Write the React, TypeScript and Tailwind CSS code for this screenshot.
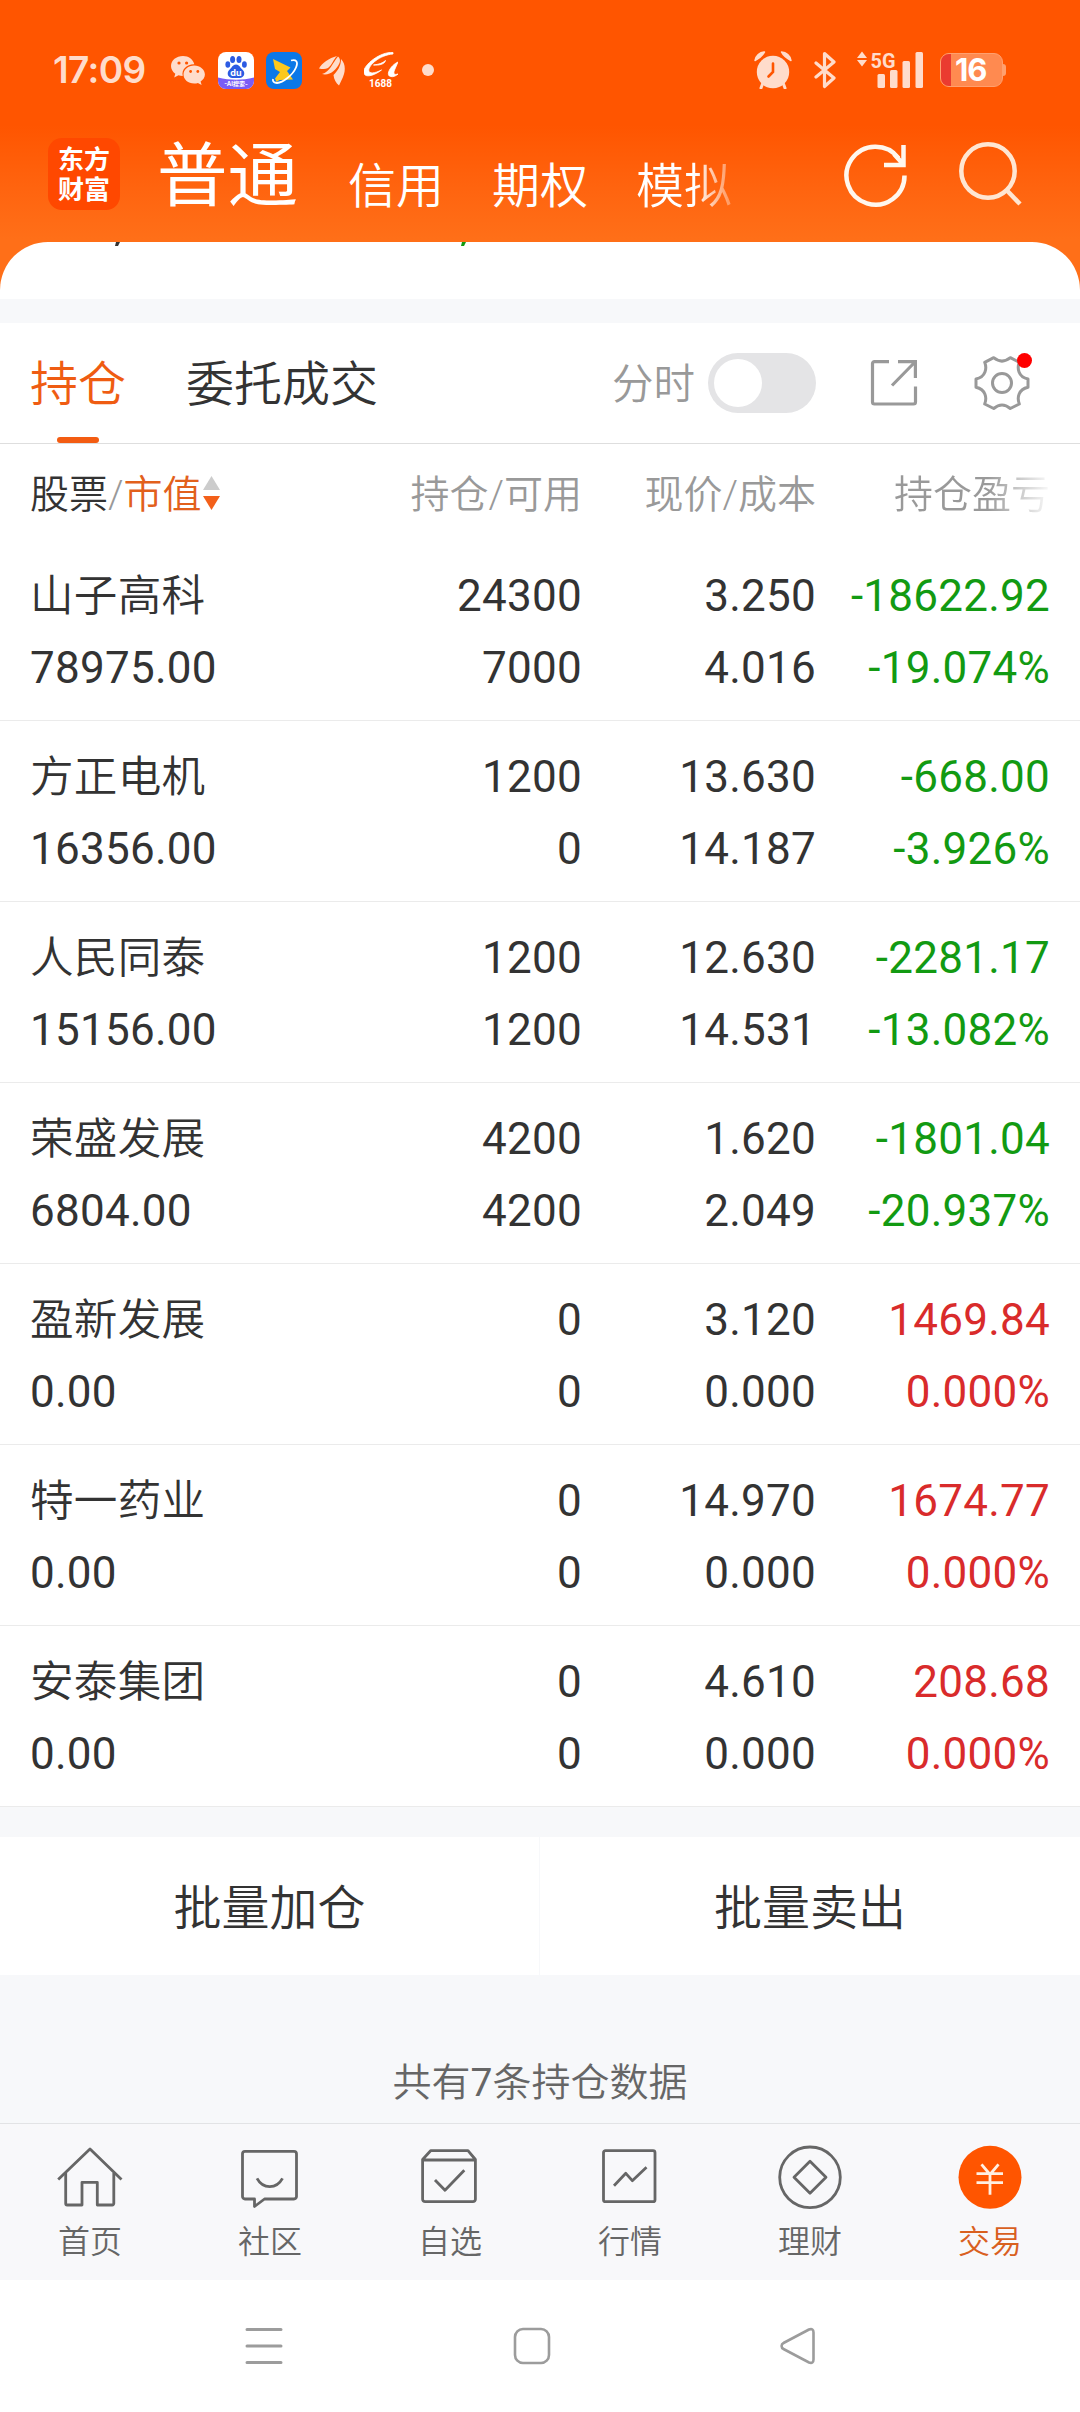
import { ReactNode } from "react";

type Holding = {
  name: string;
  value: string;
  amount: string;
  available: string;
  price: string;
  cost: string;
  profit: string;
  percent: string;
};

const HOLDINGS: Holding[] = [
  { name: "山子高科", value: "78975.00", amount: "24300", available: "7000", price: "3.250", cost: "4.016", profit: "-18622.92", percent: "-19.074%" },
  { name: "方正电机", value: "16356.00", amount: "1200", available: "0", price: "13.630", cost: "14.187", profit: "-668.00", percent: "-3.926%" },
  { name: "人民同泰", value: "15156.00", amount: "1200", available: "1200", price: "12.630", cost: "14.531", profit: "-2281.17", percent: "-13.082%" },
  { name: "荣盛发展", value: "6804.00", amount: "4200", available: "4200", price: "1.620", cost: "2.049", profit: "-1801.04", percent: "-20.937%" },
  { name: "盈新发展", value: "0.00", amount: "0", available: "0", price: "3.120", cost: "0.000", profit: "1469.84", percent: "0.000%" },
  { name: "特一药业", value: "0.00", amount: "0", available: "0", price: "14.970", cost: "0.000", profit: "1674.77", percent: "0.000%" },
  { name: "安泰集团", value: "0.00", amount: "0", available: "0", price: "4.610", cost: "0.000", profit: "208.68", percent: "0.000%" },
];

const StatusBar = () => (
  <div className="flex h-[125px] items-start justify-between pr-[74px] pl-[53px] pt-[50px]">
    <div className="flex h-10 items-center">
      <span className="w-[118px] font-['Inter'] text-[37px] leading-10 font-semibold tracking-[-0.6px] text-[#ffdccb]">
        17:09
      </span>
      <svg width="34" height="30" viewBox="0 0 34 30" fill="#ffdccb">
        <path d="M12 1C5.400 1 0 5.300 0 11c0 3.200 1.700 5.900 4.300 7.700L3.200 22.500l4.300-2.200c1.300.4 2.700.6 4.200.6-1.400-6.600 4.500-11.900 11.600-11.600C22.200 4.500 17.600 1 12 1z" />
        <path d="M23.200 10.600c-6 0-10.700 4-10.700 9s4.700 9 10.700 9c1.300 0 2.600-.2 3.700-.6l3.700 2-1-3.400c2.600-1.700 4.300-4.200 4.300-7 0-5-4.800-9-10.700-9z" />
        <g fill="#ff5500">
          <circle cx="8" cy="8" r="1.600" />
          <circle cx="15.600" cy="8" r="1.600" />
          <circle cx="19.600" cy="16.500" r="1.400" />
          <circle cx="26.800" cy="16.500" r="1.400" />
        </g>
      </svg>
      <svg className="ml-[13px]" width="36" height="37" viewBox="0 0 36 37">
        <rect width="36" height="37" rx="8" fill="#fff" />
        <path d="M0 25.500c12 3 24 3 36 0V29a8 8 0 0 1-8 8H8a8 8 0 0 1-8-8z" fill="#7a5cf5" />
        <g fill="#2b5be3">
          <ellipse cx="9.800" cy="12.500" rx="2.400" ry="3.300" />
          <ellipse cx="14.600" cy="7.500" rx="2.500" ry="3.500" />
          <ellipse cx="21" cy="7.500" rx="2.500" ry="3.500" />
          <ellipse cx="26.400" cy="12.500" rx="2.400" ry="3.300" />
          <path d="M18 12.500c3.200 0 4.300 3.300 6.300 5 3.600 3 2 8.500-2.800 8.500h-7c-4.800 0-6.400-5.500-2.800-8.500 2-1.700 3.100-5 6.300-5z" />
        </g>
        <text x="18" y="24" fontSize="9" fontWeight="700" fill="#fff" textAnchor="middle" fontFamily="Inter">du</text>
        <text x="18" y="34" fontSize="6" fontWeight="700" fill="#fff" textAnchor="middle" fontFamily="Inter, 'Noto Sans CJK SC'">-AI搜索-</text>
      </svg>
      <svg className="ml-3" width="36" height="37" viewBox="0 0 36 37">
        <rect width="36" height="37" rx="8" fill="#0b78e8" />
        <path d="M7 7l17.500 8.500-3.500 3.500 6 8.500-13.500.5-3 2-1.500-3.500 5-6.500-5-3z" fill="#fcc81c" />
        <path d="M25 8.500c5-1.500 7.500 1 5 7-3.500 8-13 15-19 15.500-3 0-4.500-1.500-4-4" fill="none" stroke="#fff" strokeWidth="1.800" />
      </svg>
      <svg className="ml-[17px]" width="26" height="31" viewBox="0 0 26 31" fill="#ffdccb">
        <path d="M0 13.500C3 8 10 3 18 1c-4 4-5 9-9 12-3 1.700-6 1-9 .5z" />
        <path d="M3 19C11 17 13.500 8 19 1.500c2 1.500 2.500 4 1.500 6.500-3 7-10 13-17.500 11z" />
        <path d="M14.500 20c4-4 7.500-9 7.500-16 4 4 4.500 10 3 15-1.500 5-3.500 8-5 11.500-3-2.500-5-6-5.500-10.500z" />
      </svg>
      <svg className="ml-[19px]" width="34" height="37" viewBox="0 0 34 37">
        <path
          d="M29 .5C16-.5-.5 13-.2 20c.3 6.500 10 4 17.700-2-7 3.500-12.500 4-12.700.5C4.500 13 16 3 29 2zM9.500 13c5 .5 11-.5 12-4.500-3 3-7 3.800-12 4.500zM34 10c-7 3-13 13-7.500 14.500 3 .8 6-1 7.500-2.500-3.500 1-5 .5-3.500-4z"
          fill="#fff"
          stroke="#fff"
          strokeWidth=".8"
        />
        <text x="16.500" y="35" fontSize="10" fontWeight="700" fill="#fff" textAnchor="middle" fontFamily="Roboto">1688</text>
      </svg>
      <span className="ml-6 size-3 rounded-full bg-[#ffdccb]" />
    </div>

    <div className="flex h-10 items-center">
      <svg width="38" height="38" viewBox="0 0 38 38" fill="#ffdccb">
        <circle cx="19" cy="21" r="16.200" />
        <path d="M1 9.500A10 10 0 0 1 10.500 1Q8 6 1 9.500zM37 9.500A10 10 0 0 0 27.500 1Q30 6 37 9.500z" stroke="#ffdccb" strokeWidth="1.500" strokeLinejoin="round" />
        <path d="M8.500 33L7 37M29.500 33l1.500 4" stroke="#ffdccb" strokeWidth="3" strokeLinecap="round" />
        <path d="M19 12.500V21l-4.500 4.500" fill="none" stroke="#ff5500" strokeWidth="2.600" strokeLinecap="round" />
      </svg>
      <svg className="ml-[22px]" width="22" height="38" viewBox="0 0 22 38" fill="none" stroke="#ffdccb" strokeWidth="3.200" strokeLinejoin="round" strokeLinecap="round">
        <path d="M2 12l18 15-9.500 8.500v-33L20 11 2 26" />
      </svg>
      <svg className="ml-[21px] overflow-visible" width="68" height="38" viewBox="0 0 68 38" fill="#ffdccb">
        <path d="M5 .5L10 7H0zM5 15.500L10 9H0z" />
        <text x="13.500" y="16.500" fontSize="21" fontWeight="700" textLength="25" lengthAdjust="spacingAndGlyphs" fontFamily="Roboto">5G</text>
        <rect x="20.500" y="23" width="7.500" height="14" rx="1.500" />
        <rect x="33" y="19" width="7.500" height="18" rx="1.500" />
        <rect x="45.500" y="10" width="7.500" height="27" rx="1.500" />
        <rect x="58.500" y="1" width="7.500" height="36" rx="1.500" />
      </svg>
      <div className="ml-[15px] flex items-center">
        <div className="flex h-[34px] w-[63px] items-center overflow-hidden rounded-[9px] border border-[#ffa06f] bg-[#ff8a50]">
          <div className="h-full w-2.5 bg-[#ea3b30]" />
          <span className="ml-1 font-['Inter'] text-[31px] leading-8 font-bold tracking-[-1px] text-white">16</span>
        </div>
        <div className="h-3 w-[3px] rounded-r-sm bg-[#ffa06f]" />
      </div>
    </div>
  </div>
);

const Header = () => (
  <div className="flex h-[117px] items-start pl-12">
    <p className="mt-[13px] size-[72px] rounded-[14px] bg-[#ff4800] pt-[5px] text-center font-['Noto_Sans_CJK_SC',sans-serif] text-[26px] leading-[30px] font-bold text-white">
      东方
      <br />
      财富
    </p>
    <div className="ml-[37px] flex text-[48px] font-[350] whitespace-nowrap text-white">
      <span className="mt-0.5 w-[191px] text-[70.5px] leading-[100px] font-normal">普通</span>
      <span className="mt-3 w-[144px] leading-[100px]">信用</span>
      <span className="mt-3 w-36 leading-[100px]">期权</span>
      <span className="mt-3 bg-linear-to-r from-white from-60% to-white/30 bg-clip-text leading-[100px] text-transparent">
        模拟
      </span>
    </div>
    <svg className="mt-[17px] ml-[111px]" width="66" height="66" viewBox="0 0 66 66" fill="none" stroke="#fff7ee" strokeWidth="4.500">
      <path d="M61.500 33.500A29 29 0 1 1 55.500 16" />
      <path d="M60.500 3v20H41M60 22L51 12" />
    </svg>
    <svg className="mt-[15px] ml-[48px]" width="66" height="66" viewBox="0 0 66 66" fill="none" stroke="#ffe6d2" strokeWidth="4.500">
      <circle cx="31" cy="31" r="26.700" />
      <path d="M49.500 50L63 64" />
    </svg>
  </div>
);

const Tabs = () => (
  <div className="flex h-[121px] items-center border-b border-[#dedede] pl-[30px] font-[350]">
    <div className="relative flex h-full items-center pt-1 text-[48px] text-[#ef5c12]">
      持仓
      <span className="absolute bottom-0 left-[27px] h-1.5 w-[42px] rounded-full bg-[#f35c12]" />
    </div>
    <span className="ml-[60px] w-[426px] pt-1 text-[48px] text-[#333]">委托成交</span>
    <span className="w-24 pt-1 text-[41.5px] text-[#999]">分时</span>
    <div className="flex h-[60px] w-[108px] shrink-0 items-center rounded-full bg-[#e4e4e6] p-1.5">
      <span className="size-12 rounded-full bg-white" />
    </div>
    <svg className="ml-[54px] shrink-0" width="48" height="48" viewBox="0 0 48 48" fill="none" stroke="#999" strokeWidth="3.200">
      <path d="M19 2.600H4.500a2 2 0 0 0-2 2V43a2 2 0 0 0 2 2h39a2 2 0 0 0 2-2V27.500" />
      <path d="M28 2.600h17.400V19M45 3L22 26.500" />
    </svg>
    <div className="relative ml-[54px] shrink-0">
      <svg width="60" height="60" viewBox="0 0 60 60" fill="none" stroke="#999" strokeWidth="3" strokeLinejoin="round">
        <path d="M21.700 4.700Q30 11.500 38.300 4.700L47.300 9.300C45 15 46 24 56 26V34.300C46 36.500 45 45 47.300 51L38.300 55.500Q30 48.500 21.700 55.500L12.700 51C15 45 14 36.500 4 34.300V26C14 24 15 15 12.700 9.300Z" />
        <circle cx="30" cy="30" r="9.500" />
      </svg>
      <span className="absolute top-0 right-0 size-[15px] rounded-full bg-[#ff0000]" />
    </div>
  </div>
);

const ColumnTitles = () => (
  <div className="grid h-24 grid-cols-[300px_252px_234px_234px] items-center px-[30px] pt-1.5 text-[39px] leading-[60px] font-[350] text-[#999]">
    <div className="flex items-center whitespace-nowrap">
      <span className="text-[#333]">股票</span>/<span className="text-[#e2601c]">市值</span>
      <svg className="ml-px -mt-1" width="17" height="36" viewBox="0 0 17 36">
        <path d="M8.500 1L17 15H0z" fill="#ccc" />
        <path d="M8.500 35L17 21H0z" fill="#f3601a" />
      </svg>
    </div>
    <span className="text-right">持仓/可用</span>
    <span className="text-right">现价/成本</span>
    <span className="justify-self-end bg-linear-to-r from-[#999] from-60% to-[#999]/5 bg-clip-text text-transparent">
      持仓盈亏
    </span>
  </div>
);

const HoldingRow = ({ item }: { item: Holding }) => {
  const color = item.profit.startsWith("-") ? "text-[#129a12]" : "text-[#d92b2b]";
  return (
    <div className="grid h-[181px] grid-cols-[300px_252px_234px_234px] grid-rows-[72px_72px] border-b border-[#ebebeb] px-[30px] pt-5 text-[44px] leading-[72px] tracking-[0.25px] whitespace-nowrap text-[#333]">
      <span className="pt-px text-[43.6px] font-[350]">{item.name}</span>
      <span className="text-right">{item.amount}</span>
      <span className="text-right">{item.price}</span>
      <span className={`text-right ${color}`}>{item.profit}</span>
      <span>{item.value}</span>
      <span className="text-right">{item.available}</span>
      <span className="text-right">{item.cost}</span>
      <span className={`text-right ${color}`}>{item.percent}</span>
    </div>
  );
};

const NAV_ITEMS: { label: string; icon: ReactNode }[] = [
  {
    label: "首页",
    icon: (
      <>
        <path d="M4.200 37.500L36 7l31.500 30.500" />
        <path d="M11.700 31v30.500a1.500 1.500 0 0 0 1.500 1.500H28V40.300h15.300V63h15a1.500 1.500 0 0 0 1.500-1.500V31" />
      </>
    ),
  },
  {
    label: "社区",
    icon: (
      <>
        <path d="M11 9.300h49a2.500 2.500 0 0 1 2.500 2.500v42.700A2.500 2.500 0 0 1 60 57H30.500l-10 7.500V57H11a2.500 2.500 0 0 1-2.500-2.500V11.800A2.500 2.500 0 0 1 11 9.300z" />
        <path d="M23 36.300c6 11 19.500 11 25.500 0" />
      </>
    ),
  },
  {
    label: "自选",
    icon: (
      <>
        <path d="M8.600 17.500l8-8.800H54l7.400 8.800v39.700a2.500 2.500 0 0 1-2.500 2.500H11.100a2.500 2.500 0 0 1-2.500-2.500zM8.600 18h52.800" />
        <path d="M21 38l10 10.300 19.300-20" />
      </>
    ),
  },
  {
    label: "行情",
    icon: (
      <>
        <rect x="9.500" y="8.700" width="51.500" height="51" rx="2" />
        <path d="M20 43.700l11.800-12.400 6.500 7.400 14.200-13.400" />
      </>
    ),
  },
  {
    label: "理财",
    icon: (
      <>
        <circle cx="36" cy="35.300" r="30.300" />
        <path d="M36 19.300l16 16-16 16-16-16z" />
      </>
    ),
  },
  {
    label: "交易",
    icon: (
      <>
        <circle cx="36" cy="35.300" r="31.500" fill="#ff5500" stroke="none" />
        <path d="M27.500 22.300L36 32.500l8.500-10.200M22.500 31.700h26.500M22.500 40.700h26.500M36 32v20.700" stroke="#ffefe2" />
      </>
    ),
  },
];

const BottomNav = () => (
  <div className="grid h-[157px] grid-cols-6 border-t border-[#e2e3e5] bg-[#f8f8fa] pt-[18px]">
    {NAV_ITEMS.map(({ label, icon }, index) => (
      <div key={label} className="flex flex-col items-center">
        <svg width="72" height="72" viewBox="0 0 72 72" fill="none" stroke="#666" strokeWidth="2.800" strokeLinejoin="round">
          {icon}
        </svg>
        <span className={`mt-1 text-[32px] leading-12 font-[350] ${index === 5 ? "text-[#d9601f]" : "text-[#666]"}`}>
          {label}
        </span>
      </div>
    ))}
  </div>
);

const SystemNav = () => (
  <div className="flex h-[132px] items-center bg-white pl-[245px] text-[#9c9c9c]">
    <svg width="38" height="38" viewBox="0 0 38 38" stroke="currentColor" strokeWidth="3" strokeLinecap="round">
      <path d="M2 2.500h34M2 19h34M2 35.500h34" />
    </svg>
    <svg className="ml-[230px]" width="38" height="38" viewBox="0 0 38 38" fill="none" stroke="currentColor" strokeWidth="2.600">
      <rect x="2" y="2" width="34" height="34" rx="8" />
    </svg>
    <svg className="ml-[229px]" width="36" height="38" viewBox="0 0 36 38" fill="none" stroke="currentColor" strokeWidth="2.600">
      <path d="M29 2.500L3.500 16a3.300 3.300 0 0 0 0 6L29 35.500q4.500 1.500 4.500-3V5.500q0-4.500-4.500-3z" />
    </svg>
  </div>
);

export default function App() {
  return (
    <div className="h-[2412px] w-[1080px] overflow-hidden bg-[#f7f8fa] font-['Roboto','Noto_Sans_CJK_SC',sans-serif]">
      <div className="bg-linear-to-b from-[#ff5500] from-42% to-[#ff6f18] to-80%">
        <StatusBar />
        <Header />
        {/* tail of the scrolled-away asset card */}
        <div className="h-[57px] rounded-t-[48px] bg-white">
          <svg width="480" height="5" viewBox="0 0 480 5">
            <path d="M116 0h4l-2 4h-3z" fill="#333" />
            <path d="M462 0h4l-2 4h-3z" fill="#129a12" />
          </svg>
        </div>
      </div>

      <div className="mt-6 bg-white">
        <Tabs />
        <ColumnTitles />
        {HOLDINGS.map((item) => (
          <HoldingRow key={item.name} item={item} />
        ))}
      </div>

      <div className="mt-[30px] grid h-[138px] grid-cols-2 bg-white text-center text-[48px] leading-[144px] font-[350] text-[#333]">
        <span className="border-r border-[#f7f8fa]">批量加仓</span>
        <span>批量卖出</span>
      </div>
      <p className="h-[148px] pt-[78px] text-center text-[39px] leading-[60px] font-[350] text-[#666]">
        共有<span className="font-normal">7</span>条持仓数据
      </p>

      <BottomNav />
      <SystemNav />
    </div>
  );
}
